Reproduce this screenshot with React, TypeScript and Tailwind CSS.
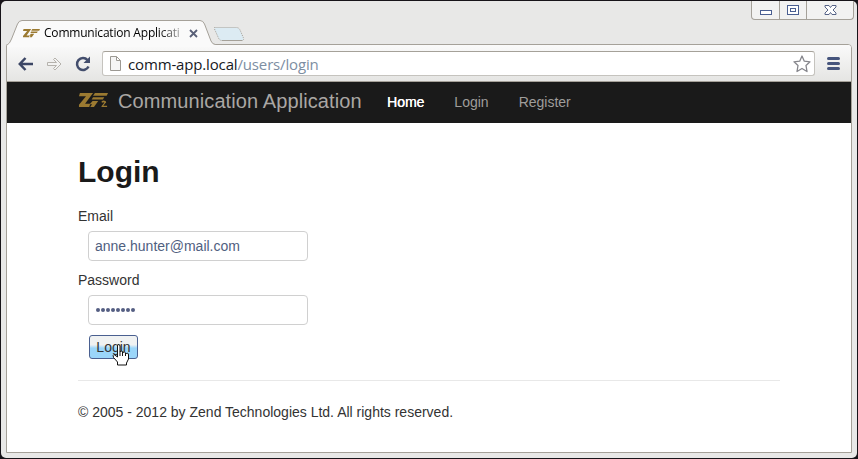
import React from "react";

function ZfLogo({ className, badge }: { className: string; badge?: boolean }) {
  return (
    <svg className={className} viewBox="0 0 31 16" fill="#9b7a31">
      <path d="M1 0H15L6.5 11.5H12L11 15H0V12.5L7.5 3.5H0Z" />
      <path d="M17 0H31L29.5 3H15Z M15 4.5H27L25.5 7H13.5Z M14.5 8.5H20.5L16 15H12L14 12H11.5Z" />
      {badge && <path d="M24 9Q26 7.3 28 8.5T28 11L26 13.5H30V15H24V14L27 10.5Q27 9.3 24.5 10.5Z" />}
    </svg>
  );
}

function WindowControls() {
  return (
    <div className="flex h-[19px] w-[103px] rounded-b-[4px] border border-t-0 border-[#a5a199] bg-[#f2f2f1]">
      <div className="w-[28px] border-r border-[#a5a199]">
        <svg className="h-[18px] w-[27px]" viewBox="0 0 27 18" fill="#fff" stroke="#4a5f91">
          <rect x="8.5" y="9.5" width="11" height="4" />
        </svg>
      </div>
      <div className="w-[27px] border-r border-[#a5a199]">
        <svg className="h-[18px] w-[26px]" viewBox="0 0 26 18" fill="#fff" stroke="#4a5f91">
          <rect x="7.5" y="4.5" width="11" height="9" />
          <rect x="10.5" y="7.5" width="5" height="3" />
        </svg>
      </div>
      <svg className="h-[18px] w-[46px]" viewBox="0 0 46 18" fill="#fff" stroke="#566386">
        <path d="M18 4.5H22L23.5 6.5L25 4.5H29V6L26 9L29 12V13.5H25L23.5 11.5L22 13.5H18V12L21 9L18 6Z" />
      </svg>
    </div>
  );
}

function TabStrip() {
  return (
    <div className="flex h-[43px] shrink-0 justify-between pr-[3px]">
      <div className="relative flex">
        <svg className="absolute top-[18px] left-[5px] h-[28px] w-[240px]" viewBox="0 0 240 28" fill="none" stroke="#a5a199">
          <path d="M0 28L.5 25.5Q4 24.5 5.5 20L11.5 5Q13 1.5 16 1.5H194Q197 1.5 198.5 5L205 22Q206.5 25.5 209.5 25.5V28Z" fill="#fafafa" stroke="none" />
          <path d="M.5 28V26.5Q4 24.5 5.5 20L11.5 5Q13 1.5 16 1.5H194Q197 1.5 198.5 5L205 22Q206.5 25.5 209.5 25.5H240" />
          <path d="M208.5 8.5H230Q233 8.5 234 11L237.500 19Q238 21.500 236 21.500H216Q213.500 21.500 212.500 19L208.500 10Z" fill="#dcebf3" strokeDasharray="1 1" />
          <path d="M216 21.500H236" />
        </svg>
        <div className="relative ml-[22px] mt-[22px] flex h-[20px] w-[176px] items-center">
          <ZfLogo className="h-[9px] w-[17px]" />
          <span className="ml-1 w-[138px] overflow-hidden bg-gradient-to-r from-black from-80% to-[#bbb] bg-clip-text font-['Open_Sans','Noto_Sans',sans-serif] text-[12px] leading-5 tracking-[-0.2px] whitespace-nowrap text-transparent">
            Communication Applicati
          </span>
          <svg className="ml-[7px] h-[9px] w-[9px] shrink-0" viewBox="0 0 9 9" stroke="#596078" strokeWidth="1.8">
            <path d="M1 1L8 8M8 1L1 8" />
          </svg>
        </div>
      </div>
      <WindowControls />
    </div>
  );
}

function Toolbar() {
  return (
    <div className="flex h-[37px] items-center rounded-tr-[3px] border-b border-[#a5a199] bg-gradient-to-b from-[#fafafa] to-[#e5e5e3] pt-px pl-[11px]">
      <svg className="h-[14px] w-[15px]" viewBox="0 0 15 14" fill="none" stroke="#3c4664" strokeWidth="2.5">
        <path d="M7.500 1L1.800 7L7.500 13M2 7H15" />
      </svg>
      <svg className="ml-[14px] h-[14px] w-[15px]" viewBox="0 0 15 14" fill="#f3f3f2" stroke="#b5b2ac">
        <path d="M.5 5.500H9.500L6.500 2.500L8 1L14 7L8 13L6.500 11.500L9.500 8.500H.5Z" />
      </svg>
      <svg className="ml-[13px] h-[16px] w-[16px]" viewBox="0 0 16 16" fill="none" stroke="#434e6d" strokeWidth="2.500">
        <path d="M13.500 10.500A6 6 0 1 1 12.500 4" />
        <path d="M15 .5V7H8.500Z" fill="#434e6d" stroke="none" />
      </svg>
      <div className="ml-[11px] flex h-[25px] w-[713px] items-center rounded-[3px] border border-t-[#a5a199] border-x-[#c5c3be] border-b-[#c5c3be] bg-white pr-[3px] pl-[7px]">
        <svg className="h-[15px] w-[11px]" viewBox="0 0 11 15" fill="#f5f5f5" stroke="#9c9993">
          <path d="M.5 .5H6.500L10.500 4.500V14.500H.5ZM6.500 .5V4.500H10.500" />
        </svg>
        <span className="ml-[7px] flex-1 font-['Open_Sans','Noto_Sans',sans-serif] text-[15px] leading-5 tracking-[-0.15px] whitespace-nowrap text-[#17191d]">
          comm-app.local<span className="text-[#7d8ea2]">/users/login</span>
        </span>
        <svg className="h-[18px] w-[18px]" viewBox="0 0 18 18" fill="#fff" stroke="#85858b" strokeWidth="1.300" strokeLinejoin="round">
          <path d="M9 1L11.300 6.200L17 6.800L13 10.500L14 16.500L9 13.500L4 16.500L5 10.500L1 6.800L6.700 6.200Z" />
        </svg>
      </div>
      <div className="ml-[12px] flex flex-col gap-[2px]">
        <i className="h-[3px] w-[13px] rounded-sm bg-[#46557d]" />
        <i className="h-[3px] w-[13px] rounded-sm bg-[#46557d]" />
        <i className="h-[3px] w-[13px] rounded-sm bg-[#46557d]" />
      </div>
    </div>
  );
}

function NavBar() {
  return (
    <nav className="flex h-[41px] items-center bg-[#1a1a1a] pl-[71px] text-[14px] text-[#9f9d9a]">
      <ZfLogo className="mb-1 h-[15px] w-[31px]" badge />
      <span className="mb-1 ml-[9px] w-[269px] text-[20px] leading-5 tracking-[0.1px] whitespace-nowrap text-[#aaa7a4]">Communication Application</span>
      <span className="text-white [text-shadow:0.3px_0_#fff]">Home</span>
      <span className="ml-[30px]">Login</span>
      <span className="ml-[30px]">Register</span>
    </nav>
  );
}

function HandCursor() {
  return (
    <svg className="absolute top-[7px] left-[22px] h-[23px] w-[18px]" viewBox="0 0 18 23" fill="#fff" stroke="#111" strokeLinejoin="round">
      <path d="M5.500 22V19L1.500 14.500Q.5 12 2 11.500L5.500 14V3Q5.500 1.500 6.700 1.500T8 3V9Q8.500 7 10.500 8.500V10Q12.500 7.500 13.500 10V11Q16.500 9 16.500 12V16L14.500 20V22Z" />
      <path d="M8 9V13M10.500 9V13M13.500 10V13" />
    </svg>
  );
}

function Page() {
  return (
    <main className="px-[71px] text-[14px] leading-5 text-[#333]">
      <h1 className="pt-[29px] text-[30px] leading-10 font-bold text-[#1a1a1a]">Login</h1>
      <form className="flex flex-col items-start pt-[14px]">
        <label>Email</label>
        <div className="mt-[5px] ml-[10px] flex h-[30px] w-[220px] items-center rounded-[4px] border border-[#d0d0d0] px-[6px] text-[#50607f]">
          anne.hunter@mail.com
        </div>
        <label className="mt-[9px]">Password</label>
        <div className="mt-[5px] ml-[10px] flex h-[30px] w-[220px] items-center gap-px rounded-[4px] border border-[#d0d0d0] px-[7px]">
          {Array.from({ length: 8 }, (_, i) => (
            <i key={i} className="size-[4px] rounded-full bg-[#545e82]" />
          ))}
        </div>
        <button type="button" className="relative mt-[10px] ml-[11px] flex h-[24px] w-[49px] items-center justify-center rounded-[3px] border border-[#4a6090] bg-gradient-to-b from-[#f0f2f2] from-40% to-[#9bd6fa] to-55% text-[#333]">
          Login
          <HandCursor />
        </button>
      </form>
      <footer className="mt-[21px] border-t border-[#e8e8e8] pt-[21px]">© 2005 - 2012 by Zend Technologies Ltd. All rights reserved.</footer>
    </main>
  );
}

export default function App() {
  return (
    <div className="h-[459px] w-[858px] bg-[#171419] p-px font-['Liberation_Sans',Arial,sans-serif]">
      <div className="flex h-full flex-col rounded-[5px] bg-[#e8e8e7] pb-[5px]">
        <TabStrip />
        <div className="mr-[5px] ml-[5px] flex-1 rounded-tr-[4px] border border-[#a5a199] bg-[#fff]">
          <Toolbar />
          <NavBar />
          <Page />
        </div>
      </div>
    </div>
  );
}
